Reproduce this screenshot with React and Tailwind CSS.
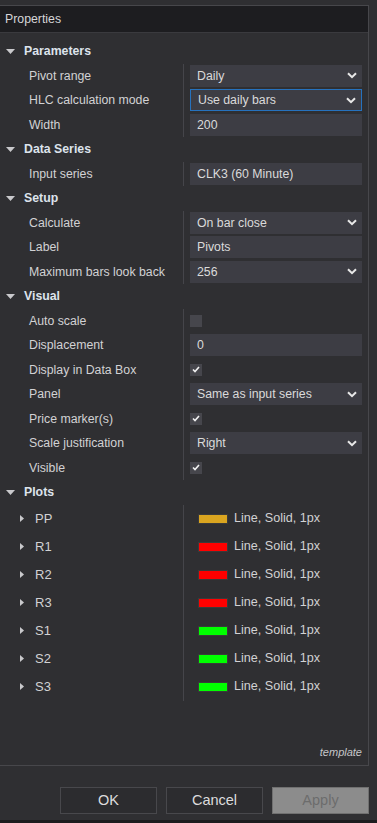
const sections = [
  {
    title: "Parameters",
    rows: [
      { label: "Pivot range", type: "select", value: "Daily" },
      { label: "HLC calculation mode", type: "select", value: "Use daily bars", focus: true },
      { label: "Width", type: "text", value: "200" },
    ],
  },
  {
    title: "Data Series",
    rows: [{ label: "Input series", type: "text", value: "CLK3 (60 Minute)" }],
  },
  {
    title: "Setup",
    rows: [
      { label: "Calculate", type: "select", value: "On bar close" },
      { label: "Label", type: "text", value: "Pivots" },
      { label: "Maximum bars look back", type: "select", value: "256" },
    ],
  },
  {
    title: "Visual",
    rows: [
      { label: "Auto scale", type: "check", value: false },
      { label: "Displacement", type: "text", value: "0" },
      { label: "Display in Data Box", type: "check", value: true },
      { label: "Panel", type: "select", value: "Same as input series" },
      { label: "Price marker(s)", type: "check", value: true },
      { label: "Scale justification", type: "select", value: "Right" },
      { label: "Visible", type: "check", value: true },
    ],
  },
];

const plots = [
  { name: "PP", color: "bg-[#daa520]" },
  { name: "R1", color: "bg-[#ff0000]" },
  { name: "R2", color: "bg-[#ff0000]" },
  { name: "R3", color: "bg-[#ff0000]" },
  { name: "S1", color: "bg-[#00ff00]" },
  { name: "S2", color: "bg-[#00ff00]" },
  { name: "S3", color: "bg-[#00ff00]" },
];

function Caret({ open }) {
  return open ? (
    <svg width="9" height="5" viewBox="0 0 9 5" className="shrink-0">
      <path d="M0 0h9L4.5 5z" fill="#c9c9cc" />
    </svg>
  ) : (
    <svg width="4" height="7" viewBox="0 0 4 7" className="shrink-0">
      <path d="M0 0l4 3.5L0 7z" fill="#c9c9cc" />
    </svg>
  );
}

function Chevron() {
  return (
    <svg width="10" height="7" viewBox="0 0 10 7" className="shrink-0">
      <path d="M1 1.2l4 4 4-4" fill="none" stroke="#e8e8e8" strokeWidth="2" />
    </svg>
  );
}

function Field({ row }) {
  if (row.type === "check") {
    return (
      <span className="w-[12px] h-[12px] bg-[#46464c] flex items-center justify-center">
        {row.value && (
          <svg width="8" height="7" viewBox="0 0 8 7">
            <path d="M1 3.5l2 2L7 1" fill="none" stroke="#f2f2f2" strokeWidth="1.6" />
          </svg>
        )}
      </span>
    );
  }
  return (
    <div
      className={`w-[172px] h-[22px] bg-[#3d3d44] flex items-center justify-between pl-[7px] pr-[5px] ${
        row.focus ? "border border-[#2672be] pl-[6px]" : ""
      }`}
    >
      <span className="text-[#dadada] whitespace-nowrap">{row.value}</span>
      {row.type === "select" && <Chevron />}
    </div>
  );
}

function SectionHeader({ title }) {
  return (
    <div className="h-[24.5px] flex items-center pl-[6px] gap-[9px]">
      <Caret open />
      <span className="font-bold text-[#dde3ec]">{title}</span>
    </div>
  );
}

export default function App() {
  return (
    <div
      className="w-[377px] h-[823px] bg-[#2f2f32] flex flex-col text-[12.3px] text-[#d2d2d4] overflow-hidden"
      style={{ fontFamily: '"Liberation Sans", Arial, sans-serif' }}
    >
      <div className="mt-[5px] w-[369px] h-[761px] border-t border-r border-b border-[#47474b] flex flex-col">
        {/* Title */}
        <div className="h-[27px] bg-[#1d1d20] border-b border-[#3a3a3e] flex items-center pl-[5px] text-[#d6d6d8]">
          Properties
        </div>

        <div className="pt-[6px] flex flex-col flex-1">
          {sections.map((s) => (
            <div key={s.title}>
              <SectionHeader title={s.title} />
              {s.rows.map((r) => (
                <div key={r.label} className="h-[24.5px] flex items-center">
                  <div className="w-[183px] pl-[29px] whitespace-nowrap">{r.label}</div>
                  <div className="flex-1 h-full border-l border-[#45454a] pl-[6px] flex items-center">
                    <Field row={r} />
                  </div>
                </div>
              ))}
            </div>
          ))}

          {/* Plots */}
          <SectionHeader title="Plots" />
          {plots.map((p) => (
            <div key={p.name} className="h-[28px] flex items-center">
              <div className="w-[183px] pl-[20px] flex items-center gap-[11px] text-[13px]">
                <Caret />
                <span>{p.name}</span>
              </div>
              <div className="flex-1 h-full border-l border-[#45454a] pl-[14px] flex items-center gap-[6px] text-[12.6px]">
                <span className={`w-[30px] h-[10px] border border-[#3a3a3a] ${p.color}`} />
                <span>Line, Solid, 1px</span>
              </div>
            </div>
          ))}

          <div className="flex-1 flex items-end justify-end pr-[6px] pb-[5px]">
            <span className="italic text-[11px] text-[#c6c6c8]">template</span>
          </div>
        </div>
      </div>

      {/* Buttons */}
      <div className="flex justify-end gap-[9px] pr-[8px] mt-[21px] text-[14.5px]">
        <button className="w-[97px] h-[27px] bg-[#2c2c2f] border border-[#48484c] text-[#dcdcde]">OK</button>
        <button className="w-[97px] h-[27px] bg-[#2c2c2f] border border-[#48484c] text-[#dcdcde]">Cancel</button>
        <button className="w-[97px] h-[27px] bg-[#8c8c8c] border border-[#707070] text-[#6c6c6c]">Apply</button>
      </div>
      <div className="mt-auto h-[3px] bg-[#1c1c1e]" />
    </div>
  );
}
